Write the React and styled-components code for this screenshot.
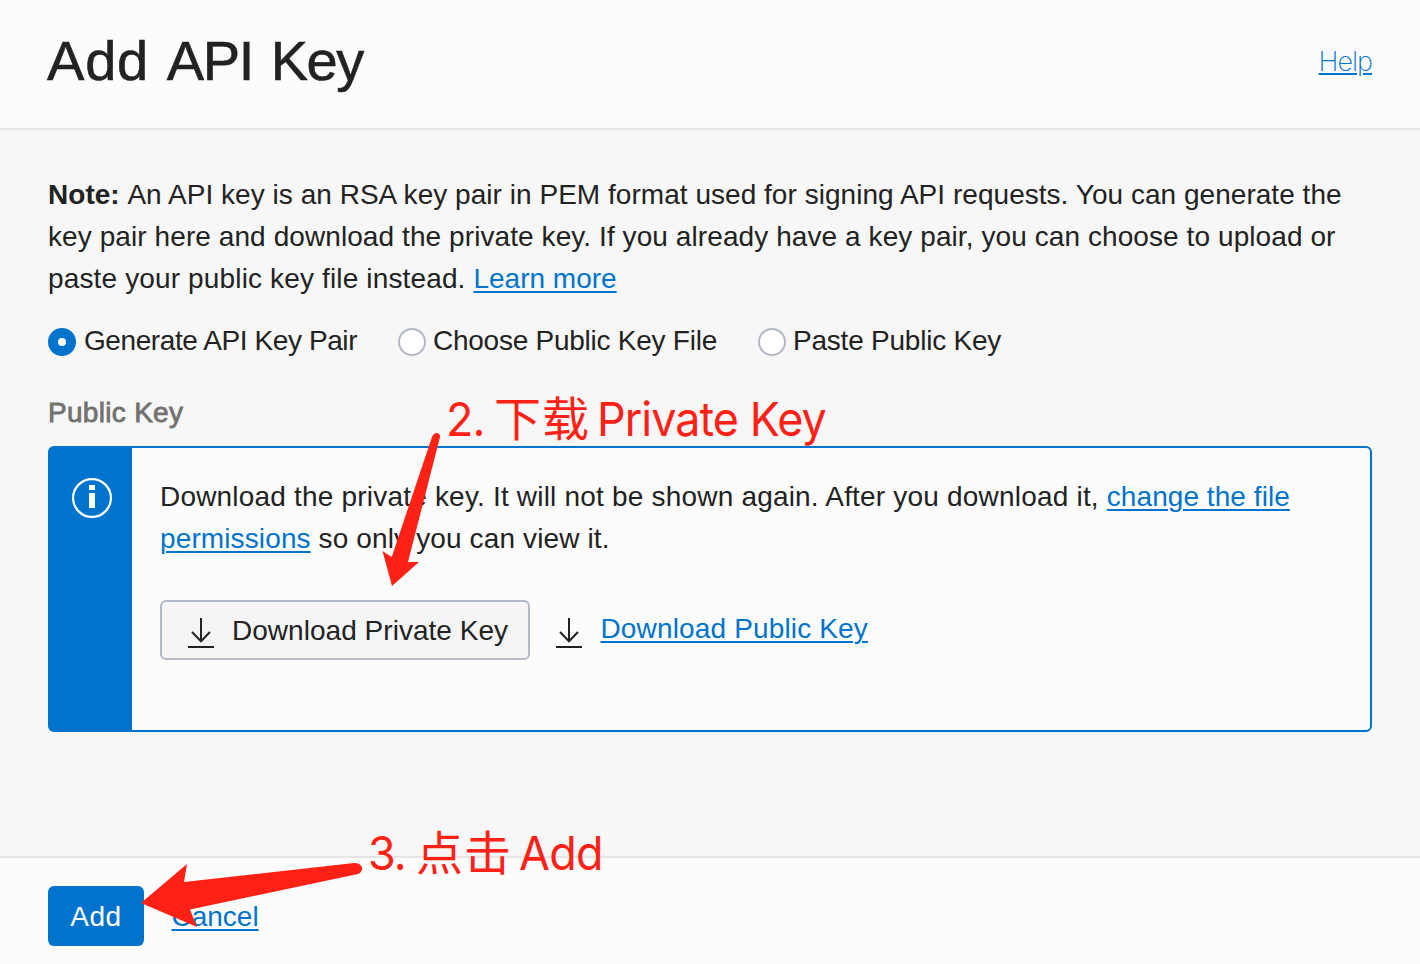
import React from 'react';
import styled, { createGlobalStyle } from 'styled-components';

const Global = createGlobalStyle`
  * { box-sizing: border-box; }
  body { margin: 0; background: #f7f7f7; }
`;

const Page = styled.div`
  position: relative;
  display: flex;
  flex-direction: column;
  width: 1420px;
  height: 964px;
  overflow: hidden;
  background: #f7f7f7;
  color: #222;
  font: 28px/42px "Liberation Sans", Arial, sans-serif;
`;
const Header = styled.header`
  display: flex;
  justify-content: space-between;
  height: 130px;
  padding: 26px 48px 0 47px;
  background: #fcfcfc;
  border-bottom: 2px solid #e5e5e5;
`;
const Title = styled.h1`
  margin: 0;
  font-size: 56px;
  font-weight: 400;
  line-height: 70px;
  white-space: nowrap;
  word-spacing: 2.2px;
  -webkit-text-stroke: 0.6px #222;
`;
const Tracked = styled.span`
  letter-spacing: ${p => p.$track}px;
`;
const Link = styled.a`
  color: #0073cd;
  text-decoration: underline;
  text-decoration-thickness: 2px;
  text-underline-offset: 3px;
  letter-spacing: ${p => p.$track || 0}px;
`;
const HelpLink = styled(Link)`
  font-family: Inter, sans-serif;
  font-size: 27px;
  font-weight: 200;
  line-height: 72px;
  text-underline-offset: 2px;
  letter-spacing: -1px;
`;
const Content = styled.main`
  flex: 1;
  padding: 44px 48px 0;
`;
const Line = styled.span`
  display: block;
  white-space: nowrap;
  letter-spacing: ${p => p.$track || 0}px;
`;
const Note = styled.p`
  margin: 0;
`;
const Strong = styled.b`
  margin-right: 1.4px;
`;
const Radios = styled.div`
  display: flex;
  margin-top: 20px;
`;
const RadioLabel = styled.label`
  display: flex;
  align-items: center;
  gap: ${p => p.$gap || 7}px;
  width: ${p => p.$width}px;
  white-space: nowrap;
  letter-spacing: ${p => p.$track || 0}px;
`;
const Radio = styled.span`
  flex: none;
  width: 28px;
  height: 28px;
  margin-top: 2px;
  border-radius: 50%;
  background: #fff;
  border: ${p => (p.$on ? '10px solid #0073cd' : '2px solid #b3b9c6')};
`;
const FieldLabel = styled.div`
  margin-top: 30px;
  color: #727270;
  letter-spacing: 0.3px;
  -webkit-text-stroke: 0.8px #727270;
`;
const Panel = styled.section`
  display: flex;
  height: 286px;
  margin-top: 12px;
  border: 2px solid #0073cd;
  border-radius: 6px;
  background: #fcfcfc;
`;
const InfoBar = styled.div`
  width: 82px;
  padding: 30px 0 0 22px;
  background: #0073cd;
`;
const InfoIcon = styled.svg`
  display: block;
  width: 40px;
  height: 40px;
`;
const PanelBody = styled.div`
  padding: 28px 0 0 28px;
`;
const Actions = styled.div`
  display: flex;
  margin-top: 40px;
`;
const DownloadButton = styled.button`
  display: flex;
  align-items: center;
  width: 370px;
  height: 60px;
  padding: 2px 0 0 26px;
  gap: 18px;
  border: 2px solid #b3b9c6;
  border-radius: 6px;
  background: #f5f5f5;
  color: #222;
  font: inherit;
  white-space: nowrap;
  letter-spacing: 0.03px;
`;
const PublicDownload = styled.div`
  display: flex;
  height: 58px;
  align-items: center;
  gap: 18.5px;
  margin-left: 26px;
`;
const Arrow = styled.svg`
  flex: none;
  width: 26px;
  height: 30px;
  margin-top: ${p => p.$drop}px;
`;
const Footer = styled.footer`
  display: flex;
  height: 108px;
  padding: 28px 48px 0;
  gap: 27.5px;
  line-height: 62px;
  border-top: 2px solid #e5e5e5;
  background: #fcfcfc;
`;
const AddButton = styled.button`
  width: 96px;
  height: 60px;
  padding: 0;
  border: 0;
  border-radius: 6px;
  background: #0073cd;
  color: #fff;
  font: inherit;
  letter-spacing: 0.5px;
`;
const Callouts = styled.svg`
  position: absolute;
  inset: 0;
  width: 1420px;
  height: 964px;
  fill: #ff2115;
  pointer-events: none;
`;
const Callout = styled.div`
  position: absolute;
  left: ${p => p.$x}px;
  top: ${p => p.$y}px;
  display: flex;
  color: #ff2115;
  font: 47px/60px Inter, "Noto Sans CJK SC", sans-serif;
  white-space: nowrap;
`;
const Part = styled.span`
  width: ${p => p.$width}px;
  letter-spacing: ${p => p.$track || 0}px;
`;
const Latin = styled(Part)`
  transform: scaleX(0.955);
  transform-origin: left;
`;

const DownloadIcon = ({ drop }) => (
  <Arrow $drop={drop} viewBox="0 0 26 30" fill="none" stroke="#222" strokeWidth="2">
    <path d="M13 0V23M4 14l9 9.2 9-9.2M0 29h26" />
  </Arrow>
);

export default function App() {
  return (
    <Page>
      <Global />
      <Header>
        <Title>
          <Tracked $track={0.8}>Add</Tracked> <Tracked $track={-1.4}>API</Tracked> <Tracked $track={-1.5}>Key</Tracked>
        </Title>
        <HelpLink>Help</HelpLink>
      </Header>
      <Content>
        <Note>
          <Line $track={0.035}><Strong>Note:</Strong> An API key is an RSA key pair in PEM format used for signing API requests. You can generate the</Line>
          <Line $track={0.083}>key pair here and download the private key. If you already have a key pair, you can choose to upload or</Line>
          <Line $track={0.145}>paste your public key file instead. <Link>Learn more</Link></Line>
        </Note>
        <Radios>
          <RadioLabel $width={350} $gap={8} $track={-0.41}><Radio $on />Generate API Key Pair</RadioLabel>
          <RadioLabel $width={360} $track={-0.25}><Radio />Choose Public Key File</RadioLabel>
          <RadioLabel $width={300} $track={-0.22}><Radio />Paste Public Key</RadioLabel>
        </Radios>
        <FieldLabel>Public Key</FieldLabel>
        <Panel>
          <InfoBar>
            <InfoIcon viewBox="0 0 40 40">
              <circle cx="20" cy="20" r="18.9" fill="none" stroke="#fff" strokeWidth="2.2" />
              <path d="M17 7h6v5h-6zM17 15h6v15h-6z" fill="#fff" />
            </InfoIcon>
          </InfoBar>
          <PanelBody>
            <Line $track={0.195}>Download the private key. It will not be shown again. After you download it, <Link $track={0.06}>change the file</Link></Line>
            <Line $track={0.13}><Link $track={0.12}>permissions</Link> so only you can view it.</Line>
            <Actions>
              <DownloadButton><DownloadIcon drop={3} />Download Private Key</DownloadButton>
              <PublicDownload><DownloadIcon drop={7} /><Link $track={0.15}>Download Public Key</Link></PublicDownload>
            </Actions>
          </PanelBody>
        </Panel>
      </Content>
      <Footer>
        <AddButton>Add</AddButton>
        <Link>Cancel</Link>
      </Footer>
      <Callouts viewBox="0 0 1420 964">
        <path d="M432 437Q433.500 433 437 433Q440.500 434 440 437L408 562H419L392 586L382.500 551L391.700 557Z" />
        <path d="M141 903L187 864L184 882L354 863Q361 863 362 868Q362.500 872 358 874L190 909.500L197 927Z" />
      </Callouts>
      <Callout $x={446} $y={389}><Latin $width={48} $track={-1}>2.</Latin><Part $width={102.5} $track={1}>下载</Part><Latin $track={-1}>Private Key</Latin></Callout>
      <Callout $x={368} $y={823}><Latin $width={48} $track={-1}>3.</Latin><Part $width={103} $track={1}>点击</Part><Latin $track={-0.7}>Add</Latin></Callout>
    </Page>
  );
}
